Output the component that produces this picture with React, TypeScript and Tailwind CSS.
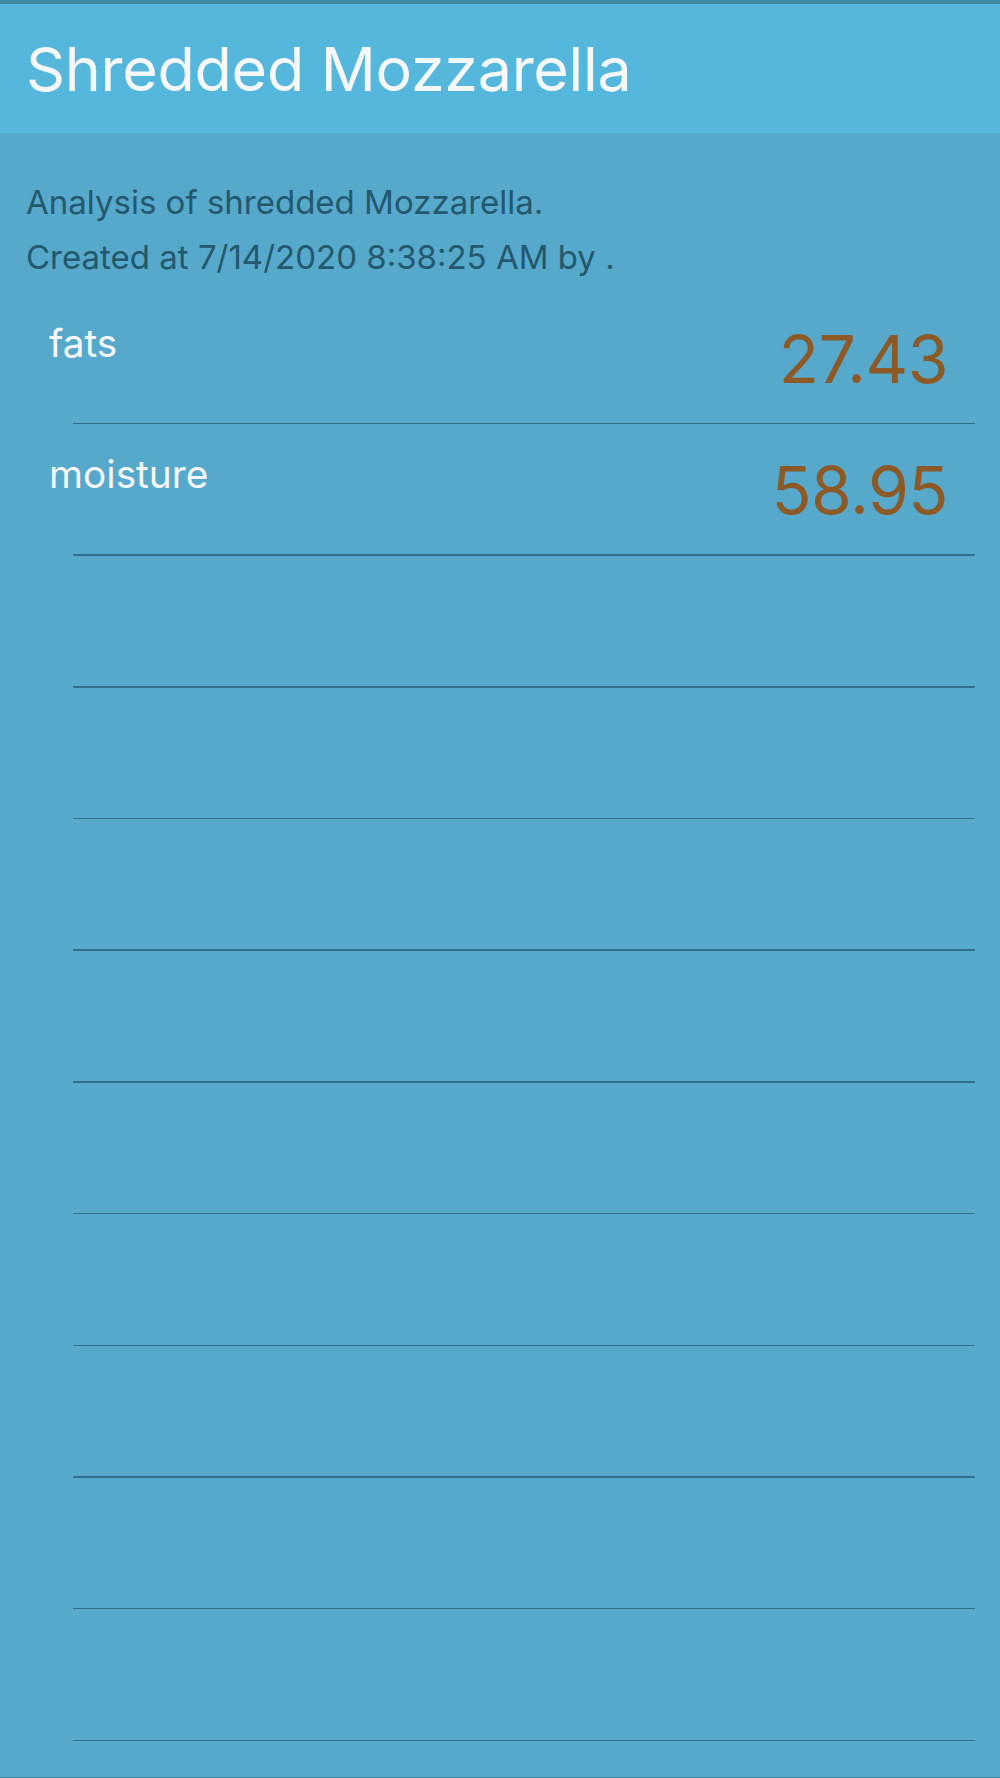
const rows: { name: string; value: string }[] = [
  { name: "fats", value: "27.43" },
  { name: "moisture", value: "58.95" },
  { name: "", value: "" },
  { name: "", value: "" },
  { name: "", value: "" },
  { name: "", value: "" },
  { name: "", value: "" },
  { name: "", value: "" },
  { name: "", value: "" },
  { name: "", value: "" },
  { name: "", value: "" },
];

export default function App() {
  return (
    <div
      className="h-[1778px] w-full flex flex-col bg-[#56a9ca] overflow-hidden"
      style={{ fontFamily: "Inter, 'Liberation Sans', sans-serif" }}
    >
      <div className="h-[4px] bg-[#3e88a3]" />
      <div className="h-[129px] bg-[#55b7dc] pl-[26px] pt-[35px]">
        <h1 className="text-[61px] leading-none text-[#f5f7f8] tracking-[-0.3px]">
          Shredded Mozzarella
        </h1>
      </div>
      <div className="flex-1 flex flex-col border-b border-[#3d86a0]">
        <div className="pt-[42px] pl-[26px] text-[33px] leading-[55px] text-[#24586e]">
          <p>Analysis of shredded Mozzarella.</p>
          <p>Created at 7/14/2020 8:38:25 AM by .</p>
        </div>
        <div className="mt-[7.5px] flex flex-col">
          {rows.map((row, i) => (
            <div key={i} className="h-[131.7px] flex flex-col">
              <div className="flex-1 flex justify-between items-start pl-[49px] pr-[52px]">
                <span className="pt-[31px] text-[38.8px] leading-none text-[#f4f8fa]">
                  {row.name}
                </span>
                <span className="pt-[33px] text-[66px] leading-none text-[#8d5a27] tracking-[-0.5px]">
                  {row.value}
                </span>
              </div>
              <div className="ml-[73px] mr-[25px] h-[1.5px] bg-[#336f87]" />
            </div>
          ))}
        </div>
      </div>
    </div>
  );
}
